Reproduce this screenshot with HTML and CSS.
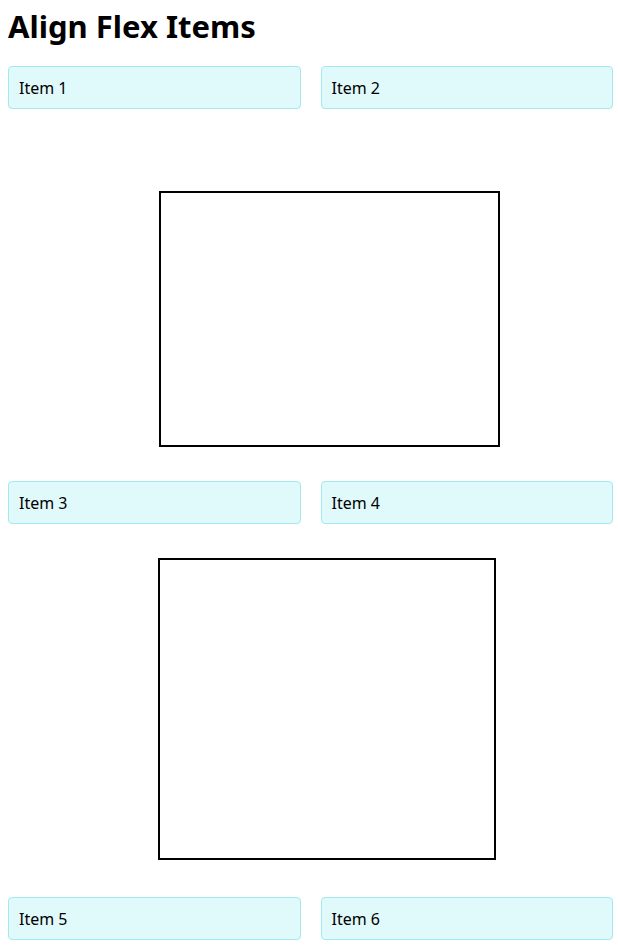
FILE: index.html
```html
<!DOCTYPE html>
<html lang="en">
<head>
<meta charset="utf-8">
<title>Align Flex Items</title>
<link rel="stylesheet" href="styles.css">
</head>
<body>
<h1 class="title">Align Flex Items</h1>
<div class="row">
  <div class="item">Item 1</div>
  <div class="item">Item 2</div>
</div>
<div class="frame frame-a"></div>
<div class="row">
  <div class="item">Item 3</div>
  <div class="item">Item 4</div>
</div>
<div class="frame frame-b"></div>
<div class="row">
  <div class="item">Item 5</div>
  <div class="item">Item 6</div>
</div>
</body>
</html>
```
FILE: styles.css
```css
html, body {
  background: #ffffff;
}
body {
  margin: 0;
  padding: 8px 5px 0 8px;
  font-family: "Noto Sans", "Open Sans", sans-serif;
  color: #000;
  display: flex;
  flex-direction: column;
}
.title {
  margin: 0;
  font-size: 31px;
  font-weight: 700;
  line-height: 36px;
}
.row {
  display: grid;
  grid-template-columns: 1fr 1fr;
  gap: 20px;
}
.row:first-of-type {
  margin-top: 22px;
}
.item {
  background: #e0f9fb;
  border: 1px solid #a3e9f2;
  border-radius: 4px;
  padding: 11px 10px 9px;
  font-size: 16px;
  line-height: 21px;
}
.frame {
  border: 2px solid #000;
  box-sizing: border-box;
}
.frame-a {
  width: 341px;
  height: 256px;
  margin: 82px 0 34px 151px;
}
.frame-b {
  width: 338px;
  height: 302px;
  margin: 34px 0 37px 150px;
}
```
